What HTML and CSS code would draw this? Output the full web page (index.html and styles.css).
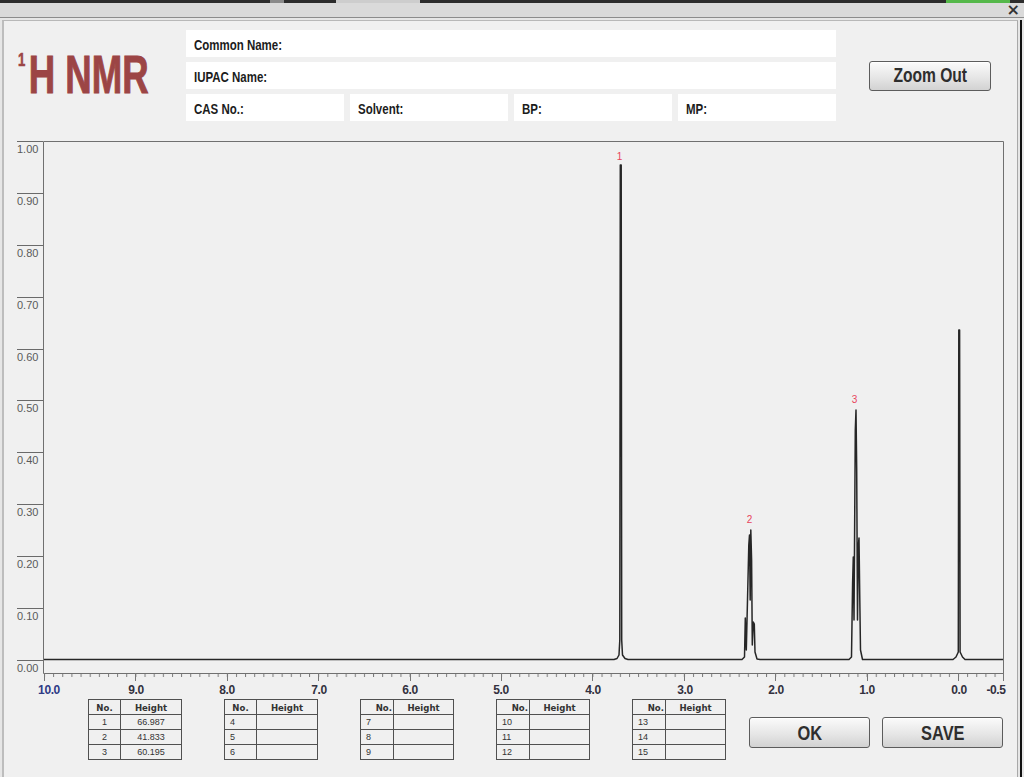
FILE: index.html
```html
<html>
	<head>
		<title>1H NMR</title>
		<link rel="stylesheet" href="styles.css">
	</head>
	<body>
		<div class='taskbar'></div>
		<div class='titlebar'><span class='close'>&#215;</span></div>
		<div class='window'>
			<div class='dialog'>
				<div class='head'>
					<h1 class='title'><span class='sq'><sup>1</sup>H NMR</span></h1>
					<div class='fields'>
						<div class='field wide'><span class='sq'>Common Name:</span></div>
						<div class='field wide'><span class='sq'>IUPAC Name:</span></div>
						<div class='field'><span class='sq'>CAS No.:</span></div>
						<div class='field'><span class='sq'>Solvent:</span></div>
						<div class='field'><span class='sq'>BP:</span></div>
						<div class='field'><span class='sq'>MP:</span></div>
					</div>
					<button class='btn zoom'><span class='sq'>Zoom Out</span></button>
				</div>

				<svg class='chart' width='1013' height='568' viewBox='4 130 1013 568'>
					<defs>
						<pattern id='minor' x='44' y='673' width='9.14' height='4' patternUnits='userSpaceOnUse'>
							<line x1='0.5' y1='0' x2='0.5' y2='4' stroke='#7a7a7a' stroke-width='1'/>
						</pattern>
					</defs>
					<!-- frame -->
					<path d='M43.5 141.5H1003.5V673.5M43.5 141.5V673.5H1003.5' fill='none' stroke='#707070' stroke-width='1'/>
					<rect x='44' y='674' width='960' height='3' fill='url(#minor)'/>
					<!-- y ticks -->
					<path class='ytick' d='M17 141.5H43M17 193.5H43M17 245.5H43M17 297.5H43M17 349.5H43M17 400.5H43M17 452.5H43M17 504.5H43M17 556.5H43M17 608.5H43M17 660.5H43'/>
					<g class='ylab'>
						<text x='17' y='152.5'>1.00</text>
						<text x='17' y='204.5'>0.90</text>
						<text x='17' y='256.5'>0.80</text>
						<text x='17' y='308.5'>0.70</text>
						<text x='17' y='360.5'>0.60</text>
						<text x='17' y='411.5'>0.50</text>
						<text x='17' y='463.5'>0.40</text>
						<text x='17' y='515.5'>0.30</text>
						<text x='17' y='567.5'>0.20</text>
						<text x='17' y='619.5'>0.10</text>
						<text x='17' y='671.5'>0.00</text>
					</g>
					<!-- x ticks -->
					<path class='xtick' d='M44.5 673V681M135.5 673V681M227.5 673V681M318.5 673V681M410.5 673V681M501.5 673V681M592.5 673V681M684.5 673V681M775.5 673V681M867.5 673V681M958.5 673V681M1003.5 673V681'/>
					<g class='xlab'>
						<text x='49' y='694' class='first'>10.0</text>
						<text x='136' y='694'>9.0</text>
						<text x='227' y='694'>8.0</text>
						<text x='319' y='694'>7.0</text>
						<text x='410' y='694'>6.0</text>
						<text x='501' y='694'>5.0</text>
						<text x='593' y='694'>4.0</text>
						<text x='685' y='694'>3.0</text>
						<text x='776' y='694'>2.0</text>
						<text x='867' y='694'>1.0</text>
						<text x='959' y='694'>0.0</text>
						<text x='996' y='694'>-0.5</text>
					</g>
					<!-- spectrum -->
					<path class='trace' d='M44 659.5H614L617 658.5L619 655L619.8 640L620.3 165L621.2 165L621.7 640L622.5 655L625 658.5L628 659.5H742L744.5 657L745.3 618L746.3 650L747.5 600L748.8 545L749.5 535L750.2 600L750.8 530L751.6 560L752.3 645L753.3 622L754.3 624L755 652L757 659L760 659.5H849L851.5 657L852.6 583L853.3 557L854 620L855.3 430L856 410L856.7 470L857.5 620L858.4 545L859 538L859.8 600L860.5 650L862.5 659.5H953L956 657L958.3 652L958.8 330L959.6 330L960.1 652L962.5 657L965 659.5H1003'/>
					<g class='plab'>
						<text x='619.5' y='160'>1</text>
						<text x='749.5' y='523'>2</text>
						<text x='854.5' y='403'>3</text>
					</g>
				</svg>

				<div class='foot'>
					<table class='peaks'>
						<tr><th class='no'>No.</th><th>Height</th></tr>
						<tr><td class='c'>1</td><td class='c'>66.987</td></tr>
						<tr><td class='c'>2</td><td class='c'>41.833</td></tr>
						<tr><td class='c'>3</td><td class='c'>60.195</td></tr>
					</table>
					<table class='peaks'>
						<tr><th class='no'>No.</th><th>Height</th></tr>
						<tr><td>4</td><td></td></tr>
						<tr><td>5</td><td></td></tr>
						<tr><td>6</td><td></td></tr>
					</table>
					<table class='peaks'>
						<tr><th class='no r'>No.</th><th>Height</th></tr>
						<tr><td>7</td><td></td></tr>
						<tr><td>8</td><td></td></tr>
						<tr><td>9</td><td></td></tr>
					</table>
					<table class='peaks'>
						<tr><th class='no r'>No.</th><th>Height</th></tr>
						<tr><td>10</td><td></td></tr>
						<tr><td>11</td><td></td></tr>
						<tr><td>12</td><td></td></tr>
					</table>
					<table class='peaks'>
						<tr><th class='no r'>No.</th><th>Height</th></tr>
						<tr><td>13</td><td></td></tr>
						<tr><td>14</td><td></td></tr>
						<tr><td>15</td><td></td></tr>
					</table>
					<div class='actions'>
						<button class='btn big'><span class='sq'>OK</span></button>
						<button class='btn big'><span class='sq'>SAVE</span></button>
					</div>
				</div>
			</div>
			<div class='edge'></div>
		</div>
	</body>
</html>
```

FILE: styles.css
```css
body{
	margin:0;
	width:1024px;
	height:777px;
	overflow:hidden;
	background:#e6e6e6;
	font-family:"Liberation Sans",Arial,sans-serif;
}
/* condensed look: squeeze bold Liberation Sans sideways */
.sq{
	display:inline-block;
	white-space:nowrap;
	transform:scaleX(.8);
	transform-origin:left center;
}
.taskbar{
	height:3px;
	background:linear-gradient(90deg,#2c2c2c 0 270px,#8a8a8a 270px 284px,#2c2c2c 284px 336px,#cdcdcd 336px 420px,#2c2c2c 420px 946px,#55b84a 946px 1010px,#2c2c2c 1010px);
}
.titlebar{
	height:14px;
	background:#dadada;
	border-bottom:1px solid #8c8c8c;
	display:flex;
	justify-content:flex-end;
	align-items:center;
}
.close{
	font:bold 16px "DejaVu Sans",sans-serif;
	color:#333;
	line-height:14px;
	margin-right:4px;
}
.window{
	display:flex;
	padding-top:2px;
}
.dialog{
	margin-left:2px;
	width:1013px;
	height:757px;
	background:#f0f0f0;
	border-left:2px solid #bdbdbd;
	border-top:1px solid #b8b8b8;
	border-right:1px solid #a8a8a8;
	display:flex;
	flex-direction:column;
}
.edge{
	width:2px;
	margin-left:2px;
	background:#111;
}

/* header */
.head{
	display:flex;
	align-items:center;
	padding:9px 0 9px 14px;
	height:91px;
}
.title{
	width:168px;
	margin:-3px 0 0 0;
	font-weight:bold;
	font-size:53px;
	color:#9c4545;
	-webkit-text-stroke:1px #9c4545;
	line-height:1;
}
.title .sq{
	transform:scaleX(.69);
}
.title sup{
	font-size:19px;
	line-height:0;
	vertical-align:27px;
	margin-right:5px;
	-webkit-text-stroke:0.6px #9c4545;
}
.fields{
	width:650px;
	display:grid;
	grid-template-columns:repeat(4,1fr);
	grid-auto-rows:27px;
	gap:5px 6px;
}
.field{
	background:#fff;
	display:flex;
	align-items:center;
	padding:3px 0 0 8px;
	font-weight:bold;
	font-size:14px;
	color:#1c1c1c;
	box-sizing:border-box;
}
.field .sq{
	transform:scaleX(.82);
}
.field.wide{
	grid-column:span 4;
}
.btn{
	background:linear-gradient(#fbfbfb,#e6e6e6 55%,#d2d2d2);
	border:1px solid #5c5c5c;
	border-radius:3px;
	box-shadow:inset 0 1px 0 #fff;
	color:#2e2e2e;
	font-family:"Liberation Sans",sans-serif;
	font-weight:bold;
	padding:0;
	display:flex;
	justify-content:center;
	align-items:center;
}
.btn .sq{
	transform:scaleX(.78);
	transform-origin:center;
}
.zoom{
	margin-left:33px;
	width:122px;
	height:30px;
	font-size:20px;
}

/* chart */
.chart{
	display:block;
}
.ytick{
	stroke:#6a6a6a;
	stroke-width:1;
}
.ylab text{
	font-size:11px;
	fill:#5a5a5a;
}
.xtick{
	stroke:#777;
	stroke-width:1;
}
.xlab text{
	font-weight:bold;
	font-size:12px;
	letter-spacing:-0.4px;
	fill:#33313f;
	text-anchor:middle;
}
.xlab .first{
	fill:#2f3a86;
}
.trace{
	fill:none;
	stroke:#262626;
	stroke-width:1.5;
	stroke-linejoin:round;
}
.plab text{
	font-size:10px;
	fill:#e8445c;
	text-anchor:middle;
}

/* peak tables + buttons */
.foot{
	display:flex;
	align-items:flex-start;
	padding:1px 0 0 84px;
	gap:42px;
}
.peaks{
	border-collapse:collapse;
	width:94px;
	font-family:"DejaVu Sans Condensed","Liberation Sans",sans-serif;
	font-size:10px;
	color:#333;
}
.peaks th,.peaks td{
	border:1px solid #505050;
	height:15px;
	padding:0;
	line-height:13px;
}
.peaks th{
	font-weight:bold;
	text-align:center;
	font-size:9.5px;
}
.peaks .no{
	width:31px;
}
.peaks th.r{
	text-align:right;
	padding-right:1px;
}
.peaks td{
	padding-left:5px;
	font-family:"Liberation Sans",sans-serif;
	font-size:9px;
}
.peaks td.c{
	text-align:center;
	padding-left:0;
}
.actions{
	display:flex;
	gap:12px;
	margin:18px 0 0 -19px;
}
.big{
	width:121px;
	height:31px;
	font-size:21px;
}
```
